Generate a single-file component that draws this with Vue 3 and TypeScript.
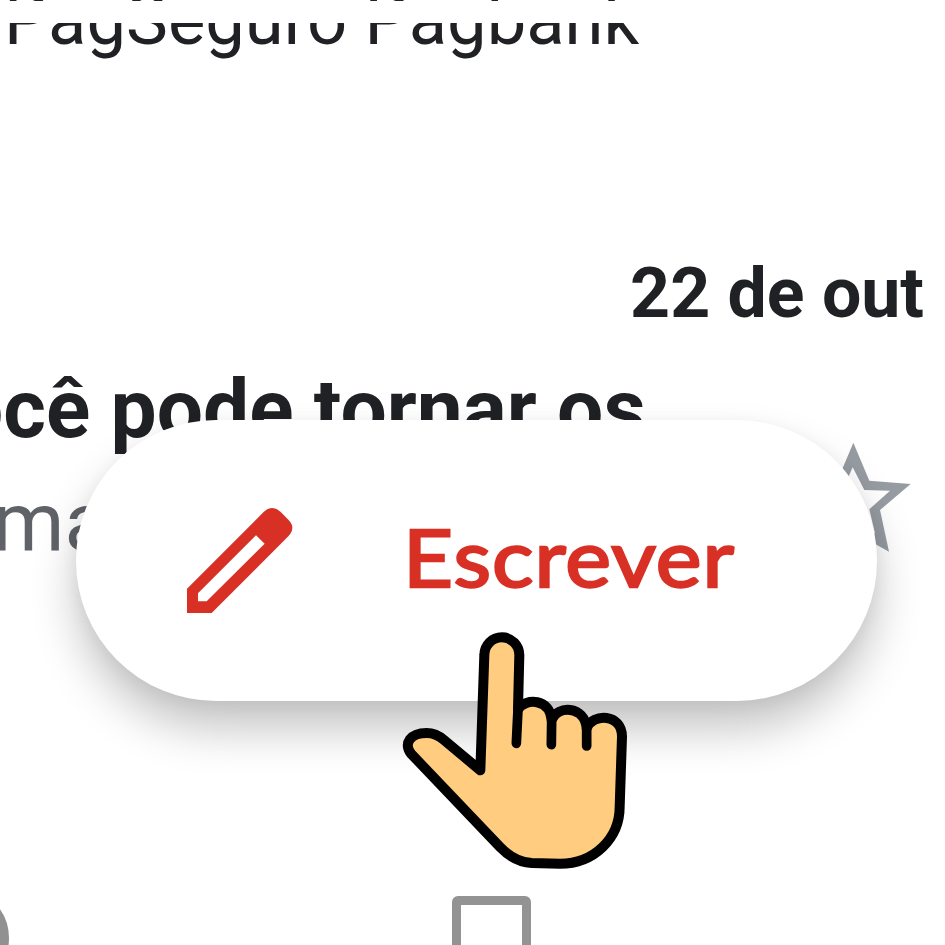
<script setup lang="ts">
const sender = 'PagSeguro Pagbank'
const date = '22 de out'
const subject = 'você pode tornar os'
const preview = 'ma'
const action = 'Escrever'
</script>

<template>
  <main class="screen">
    <div class="line sender"><span>{{ sender }}</span></div>
    <div class="line date"><span>{{ date }}</span></div>
    <div class="line subject"><span>{{ subject }}</span></div>
    <div class="line preview"><span>{{ preview }}</span></div>
    <div class="band"></div>
    <svg class="star" viewBox="-75 60 350 345" aria-hidden="true">
      <path fill-rule="evenodd" d="M100 68 148 182 272 192 180 270 207 395 100 335 -7 395 20 270 -72 192 52 182ZM98 142 133 210 210 212 148 268 165 340 100 306 32 345 52 268 -8 212 68 210Z" />
    </svg>
    <nav class="tabs">
      <svg class="round" viewBox="0 0 12 50" aria-hidden="true">
        <circle cx="-41" cy="43" r="45.5" />
      </svg>
      <span class="square"></span>
    </nav>
    <button class="compose">
      <svg class="pencil" viewBox="51 51 318 318" aria-hidden="true">
        <path fill-rule="evenodd" d="M51 296 280 67Q306 41 333 67L355 89Q379 112 355 139L125 369H51ZM258 136 284 161 110 334H84V310Z" />
      </svg>
      <span class="label">{{ action }}</span>
    </button>
    <svg class="hand" viewBox="0 0 750 780" aria-hidden="true">
      <path class="skin" d="M271 451 283 105A52.500 53 0 0 1 388 105L384 267C408 233 480 236 485 300 500 256 584 256 590 325 608 278 696 281 696 350L689 560C689 655 612 731 510 731L425 729C390 727 358 710 330 681L64 402C38 370 62 339 110 339 132 339 147 347 162 360Z" />
      <path class="crease" d="M384 267 379 370M485 300 484 374M590 325V378" />
    </svg>
  </main>
</template>

<style>
body { background: #fff; overflow: hidden; }
</style>

<style scoped>
.screen { position: relative; width: 945px; height: 945px; overflow: hidden; background: #fff; color: #202124; font-family: Roboto, sans-serif; display: flow-root; }
.line { white-space: nowrap; display: flex; }
.sender { margin: -20px 0 0 4px; font-size: 70.500px; line-height: 80px; height: 80px; transform: translateY(.4px) scaleY(.985); transform-origin: 0 64px; }
.date { margin-top: 193px; padding-right: 21px; justify-content: flex-end; font-size: 69.800px; line-height: 80px; height: 80px; font-weight: 700; }
.subject { margin-top: 28px; width: 645.500px; justify-content: flex-end; font-size: 82px; line-height: 96px; height: 96px; font-weight: 700; }
.preview { margin-top: 17px; width: 109px; justify-content: flex-end; font-size: 82px; line-height: 96px; height: 96px; color: #5f6368; }
.band { position: absolute; top: 1px; left: 0; width: 100%; height: 22px; background: #fff; }
.star { position: absolute; left: 795px; top: 440px; width: 116.700px; height: 115px; fill: #969ca2; }
.tabs { display: flex; height: 50px; margin-top: 325px; }
.round { width: 12px; height: 50px; fill: #a4a4a4; stroke: #919191; stroke-width: 9px; }
.square { box-sizing: border-box; width: 79px; height: 79px; margin: 1px 0 0 440px; border: 9px solid #939393; border-radius: 6px; }
.compose { position: absolute; left: 76px; top: 420px; box-sizing: border-box; width: 801px; height: 280.500px; padding: 0 0 8px 111px; border: 0; border-radius: 140px; background: #fff; display: flex; align-items: center; gap: 110px; color: #d93025; box-shadow: 0 28px 46px rgba(0, 0, 0, .23), 0 4px 18px rgba(0, 0, 0, .05); }
.pencil { width: 106px; height: 106px; fill: #d93025; flex: none; position: relative; top: 4px; }
.label { font-family: Lato, sans-serif; font-size: 80px; font-weight: 400; line-height: 100px; letter-spacing: 1px; -webkit-text-stroke: 2.400px #d93025; transform: scaleX(1.083); transform-origin: left; }
.hand { position: absolute; left: 390px; top: 620px; width: 250px; height: 260px; }
.skin { fill: #ffcc80; stroke: #000; stroke-width: 30px; stroke-linejoin: round; }
.crease { fill: none; stroke: #000; stroke-width: 29px; stroke-linecap: round; }
</style>
